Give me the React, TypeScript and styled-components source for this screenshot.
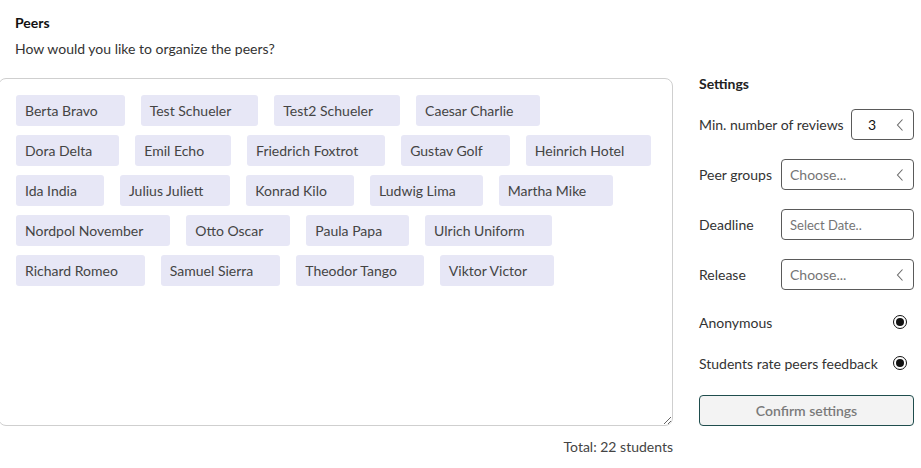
import React from "react";
import styled, { createGlobalStyle } from "styled-components";

const peers = [
  "Berta Bravo",
  "Test Schueler",
  "Test2 Schueler",
  "Caesar Charlie",
  "Dora Delta",
  "Emil Echo",
  "Friedrich Foxtrot",
  "Gustav Golf",
  "Heinrich Hotel",
  "Ida India",
  "Julius Juliett",
  "Konrad Kilo",
  "Ludwig Lima",
  "Martha Mike",
  "Nordpol November",
  "Otto Oscar",
  "Paula Papa",
  "Ulrich Uniform",
  "Richard Romeo",
  "Samuel Sierra",
  "Theodor Tango",
  "Viktor Victor",
];

const GlobalStyle = createGlobalStyle`
  body {
    margin: 0;
    background: #ffffff;
    font-family: Lato, "Open Sans", sans-serif;
    font-size: 14px;
    color: #333;
  }
`;

const Chevron = () => (
  <svg width="8" height="14" viewBox="0 0 8 14" fill="none">
    <path d="M6.5 1.5 L1.5 7 L6.5 12.5" stroke="#6b6b6b" strokeWidth="1.1" />
  </svg>
);

const App = () => {
  return (
    <Page>
      <GlobalStyle />
      <LeftColumn>
        <Title>Peers</Title>
        <Subtitle>How would you like to organize the peers?</Subtitle>
        <PeerBox>
          {peers.map((p) => (
            <PeerTag key={p}>{p}</PeerTag>
          ))}
        </PeerBox>
        <Total>Total: 22 students</Total>
      </LeftColumn>

      <Settings>
        <SettingsTitle>Settings</SettingsTitle>
        <Fields>
          <FieldRow>
            <Label>Min. number of reviews</Label>
            <SelectBox narrow>
              <Value>3</Value>
              <Chevron />
            </SelectBox>
          </FieldRow>
          <FieldRow>
            <Label>Peer groups</Label>
            <SelectBox>
              <Placeholder>Choose...</Placeholder>
              <Chevron />
            </SelectBox>
          </FieldRow>
          <FieldRow>
            <Label>Deadline</Label>
            <SelectBox>
              <Placeholder small>Select Date..</Placeholder>
            </SelectBox>
          </FieldRow>
          <FieldRow>
            <Label>Release</Label>
            <SelectBox>
              <Placeholder>Choose...</Placeholder>
              <Chevron />
            </SelectBox>
          </FieldRow>
        </Fields>
        <Options>
          <OptionRow>
            <Label>Anonymous</Label>
            <Radio />
          </OptionRow>
          <OptionRow>
            <Label>Students rate peers feedback</Label>
            <Radio />
          </OptionRow>
          <ConfirmButton>Confirm settings</ConfirmButton>
        </Options>
      </Settings>
    </Page>
  );
};

export default App;

const Page = styled.div`
  display: flex;
  gap: 26px;
  width: 921px;
  height: 468px;
  padding-right: 7px;
  box-sizing: border-box;
  overflow: hidden;
`;

const LeftColumn = styled.div`
  flex: 1;
  display: flex;
  flex-direction: column;
`;

const Title = styled.div`
  padding: 14px 0 0 15px;
  line-height: 18px;
  font-weight: 700;
  font-size: 14px;
  color: #111;
`;

const Subtitle = styled.div`
  margin-top: 8px;
  padding-left: 15px;
  line-height: 18px;
  color: #333;
`;

const PeerBox = styled.div`
  margin: 20px 0 0 -2px;
  height: 348px;
  box-sizing: border-box;
  border: 1px solid #cfcfcf;
  border-radius: 8px;
  padding: 16px 18px 16px 17px;
  display: flex;
  flex-wrap: wrap;
  align-content: flex-start;
  column-gap: 16px;
  row-gap: 9px;
  overflow: auto;
  resize: vertical;
`;

const PeerTag = styled.div`
  height: 31px;
  display: flex;
  align-items: center;
  padding: 0 27px 0 9px;
  background: #e7e7f6;
  border-radius: 3px;
  color: #444;
  white-space: nowrap;
`;

const Total = styled.div`
  margin-top: 12px;
  line-height: 18px;
  text-align: right;
  color: #444;
`;

const Settings = styled.div`
  width: 215px;
  display: flex;
  flex-direction: column;
`;

const SettingsTitle = styled.div`
  padding-top: 75px;
  line-height: 18px;
  font-weight: 700;
  font-size: 14px;
  color: #222;
`;

const Fields = styled.div`
  margin-top: 16px;
  display: flex;
  flex-direction: column;
  gap: 19px;
`;

const FieldRow = styled.div`
  height: 31px;
  display: flex;
  align-items: center;
  justify-content: space-between;
`;

const Label = styled.span`
  color: #333;
  white-space: nowrap;
`;

const SelectBox = styled.div<{ narrow?: boolean }>`
  width: ${({ narrow }) => (narrow ? "63px" : "133px")};
  height: 31px;
  box-sizing: border-box;
  border: 1px solid #5a5a5a;
  border-radius: 4px;
  display: flex;
  align-items: center;
  justify-content: space-between;
  padding: ${({ narrow }) => (narrow ? "0 9px 0 16px" : "0 9px 0 8px")};
`;

const Value = styled.span`
  color: #111;
`;

const Placeholder = styled.span<{ small?: boolean }>`
  color: #757575;
  font-size: ${({ small }) => (small ? "13px" : "14px")};
`;

const Options = styled.div`
  margin-top: 22px;
  display: flex;
  flex-direction: column;
  gap: 21px;
`;

const OptionRow = styled.div`
  height: 20px;
  display: flex;
  align-items: center;
  justify-content: space-between;
  padding-right: 7px;
`;

const Radio = styled.span`
  width: 14px;
  height: 14px;
  box-sizing: border-box;
  border: 1.3px solid #111;
  border-radius: 50%;
  display: flex;
  align-items: center;
  justify-content: center;

  &::after {
    content: "";
    width: 8px;
    height: 8px;
    border-radius: 50%;
    background: #111;
  }
`;

const ConfirmButton = styled.button`
  height: 31px;
  width: 100%;
  margin-top: 1px;
  background: #f3f3f3;
  border: 1px solid #1f4d4d;
  border-radius: 4px;
  color: #7a7a7a;
  font-family: inherit;
  font-size: 14px;
  font-weight: 600;
  cursor: pointer;
`;
